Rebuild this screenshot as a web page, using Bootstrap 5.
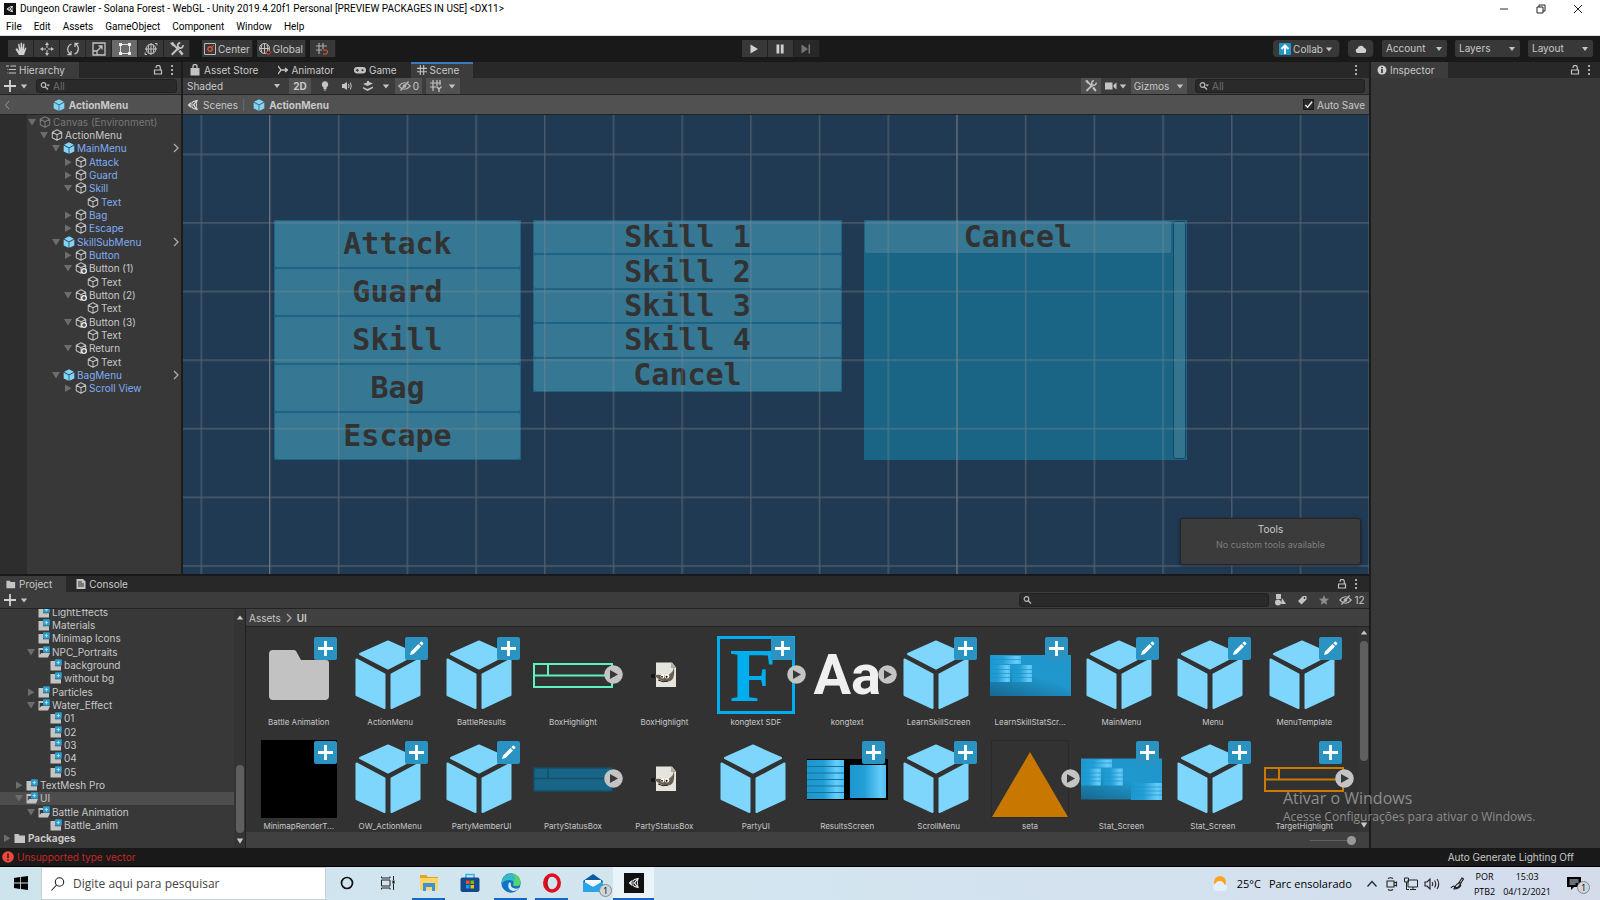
<!DOCTYPE html>
<html lang="en">
<head>
<meta charset="utf-8">
<meta name="viewport" content="width=device-width, initial-scale=1">
<title>Dungeon Crawler - Solana Forest - WebGL</title>
<link href="https://cdn.jsdelivr.net/npm/bootstrap@5.3.0/dist/css/bootstrap.min.css" rel="stylesheet">
<style>
:root{--ui:Inter,"Liberation Sans",sans-serif;--win:"Open Sans","Noto Sans",sans-serif;--panel:#383838;--bar:#3c3c3c;--dark:#282828;--line:#232323;--hi:#515151;--txt:#c8c8c8;--link:#7fadf4}
body{font-family:var(--ui);font-size:10px;line-height:12px;color:var(--txt);background:#191919;overflow:hidden}
svg{flex:none;display:block}
a{color:inherit;text-decoration:none}
button,select,input{font:inherit;color:inherit}
button{border:0;background:none;padding:0}
.i8{width:8px;height:8px}.i10{width:10px;height:10px}.i12{width:12px;height:12px}.i14{width:14px;height:14px}.i20{width:20px;height:20px}
.win{font-family:var(--win);color:#000}
.titlebar,.menubar{background:#fff;height:18px;font-family:Roboto,"Open Sans",sans-serif;font-size:10px;line-height:18px}
.menubar{border-bottom:1px solid #ddd}
.menubar a{padding:0 6px}
.winctl{width:37px;height:16px}
.maintools{height:26px;padding:4px 7px 5px 8px;background:#191919}
.tool{height:17px;width:26px;background:#383838;border-right:1px solid #222;display:flex;align-items:center;justify-content:center;gap:2px}
.tool.on{background:#6a6a6a}
.tool.wide{width:auto;padding:0 2px}
.pick{appearance:none;border:0;border-radius:2px;background:#383838 url("data:image/svg+xml,%3Csvg xmlns='http://www.w3.org/2000/svg' viewBox='0 0 6 4'%3E%3Cpath fill='%23c4c4c4' d='M0 0h6L3 4z'/%3E%3C/svg%3E") no-repeat right 5px center/6px 4px;padding:0 4px;height:17px;width:65px;font-size:10px;line-height:17px}
.pick.flat{background-color:transparent;width:102px;height:16px;line-height:16px}
.tabs{height:16px;background:var(--dark)}
.tab-item{height:16px;display:flex;align-items:center;gap:3px;padding:0 14px 0 6px;line-height:16px}
.tab-item.on{background:var(--bar)}
.tab-item.blue{box-shadow:inset 0 2px #3a79bb}
.subbar{height:17px;background:var(--bar);border-bottom:1px solid var(--line)}
.crumb{height:20px;background:var(--hi);border-bottom:1px solid var(--line)}
.find{height:14px;background:#2a2a2a;border:1px solid #212121;border-radius:3px;padding:0 3px;gap:3px}
.find input{background:none;border:0;outline:0;padding:0;min-width:0;width:100%;height:12px}
.find input::placeholder{color:#6e6e6e;opacity:1}
.chip{height:16px;display:flex;align-items:center;justify-content:center;gap:2px}
.chip.on{background:var(--hi)}
.w18{width:18px}.w20{width:20px}.w22{width:22px}.w24{width:24px}.w27{width:27px}.w34{width:34px}
.side{width:183px;background:var(--panel);border-right:2px solid #1c1c1c}
.gutter{width:27px;background:#2d2d2d}
.tree{display:grid;grid-auto-rows:1fr;margin:0;padding:0;list-style:none}
.tree li{display:flex;align-items:center;gap:2px;white-space:nowrap;min-height:0;padding-left:calc(var(--lv,0px) + var(--base,0px))}
.tree .i10{color:#6d6d6d}
.hier{height:280px;width:100%}
.l1{--lv:12px}.l2{--lv:24px}.l3{--lv:36px}.l4{--lv:48px}
.pf{color:var(--link)}
.sp{width:10px;flex:none}
.scene{background:#213a54;position:relative;overflow:hidden;padding:105px 0 0 91px}
.lattice{position:absolute;inset:0;width:100%;height:100%;pointer-events:none}
.gmenu{background:#1a6585;padding:1px;display:flex;flex-direction:column;gap:2px}
.gmenu button,.bag button{background:#367793;color:#323232;font:bold 30px/30px "DejaVu Sans Mono",monospace;border-radius:2px;text-align:center;width:100%}
.gmenu button{flex:1;min-height:0}
.m1{width:247px;height:240px;margin-right:12px}
.m2{width:309px;height:172px;margin-right:22px}
.bag{width:323px;height:240px;background:#1a6585;padding:1px}
.bag button{height:32px}
.bagbar{width:13px;flex:none;background:#33748f;border:1px solid #14495f;border-radius:3px;margin-left:2px}
.toolsbox{position:absolute;right:8px;bottom:9px;width:181px;height:47px;background:#3b3b3c;border:1px solid #252525;border-radius:3px;box-shadow:0 1px 4px #0006}
.inspector{width:231px;background:var(--panel);border-left:2px solid #1c1c1c}
.project{height:274px;border-top:2px solid #191919;background:var(--panel)}
.projtree{width:234px;overflow:hidden;padding-bottom:3px}
.proj{height:240px;flex:none;--base:2px}
.proj .sel{background:#4d4d4d}
.rail{width:11px;flex:none;background:#343434;padding:5px 1px 3px}
.thumb{width:8px;border-radius:4px;background:#5f5f5f}
.assets{background:#323232;overflow:hidden;border-left:1px solid #222}
.assetgrid{display:grid;grid-template-columns:repeat(12,1fr);row-gap:10px;padding:9px 8px 0 7px;height:206px;overflow:hidden}
.asset{display:flex;flex-direction:column;align-items:center;min-width:0;font-size:8px;line-height:16px}
.shot{width:76px;height:78px;position:relative;display:flex;align-items:center;justify-content:center}
.shot>.bigcube{width:66px;height:70px;margin-right:5px}
.bdg{position:absolute;top:1px;right:0;width:23px;height:23px}
.go{position:absolute;right:-12px;top:29px;width:19px;height:19px}
.fnt{font:bold 56px/78px Roboto,sans-serif;color:#f0f0f0}
.sdf{width:78px;height:78px;flex:none;border:3px solid #00aeef;color:#00aeef;font:bold 76px/72px "Liberation Serif",serif;padding-left:10px}
.zoomer{appearance:none;width:46px;height:8px;background:linear-gradient(#5e5e5e,#5e5e5e) center/100% 1px no-repeat}
.zoomer::-webkit-slider-thumb{appearance:none;width:9px;height:9px;border-radius:50%;background:#999}
.tick{appearance:none;width:11px;height:11px;margin:0;background:#2a2a2a url("data:image/svg+xml,%3Csvg xmlns='http://www.w3.org/2000/svg' viewBox='0 0 10 10'%3E%3Cpath fill='none' stroke='%23eee' stroke-width='1.6' d='M1.500 5.500l2.500 2.500 5-6'/%3E%3C/svg%3E") center/9px no-repeat;border:1px solid #1a1a1a}
.status{height:19px;background:#191919;border-bottom:1px solid #000;padding:0 26px 0 2px}
.watermark{position:absolute;left:1283px;bottom:74px;color:#8d8d8d;font-family:var(--win);pointer-events:none}
.taskbar{height:33px;background:linear-gradient(90deg,#cde4ed,#d3e6f0 45%,#d4dcec)}
.seek{width:285px;background:#fff;border:1px solid #c8d0d4;padding:0 9px;gap:8px}
.seek input{border:0;outline:0;font-size:12px;width:100%;padding:0}
.seek input::placeholder{color:#444;opacity:1}
.app{width:41px;height:33px;display:flex;align-items:center;justify-content:center;border-bottom:2px solid transparent;position:relative}
.app.run{background:linear-gradient(#1a66c4,#1a66c4) center bottom/33px 2px no-repeat border-box}
.app.act{background:#eaf3f8;border-bottom-color:#1a66c4}
.count{position:absolute;right:1px;bottom:1px;width:13px;height:13px;border-radius:50%;border:1px solid #888;background:#ccd6dc;font-size:9px;line-height:11px;text-align:center}
.tray{font-size:11px}
.trayicons{gap:6px;padding:0 10px 0 14px}
.clock{font-size:9px;line-height:15px;text-align:center}
</style>
</head>
<body class="d-flex flex-column vh-100">
<svg width="0" height="0" class="position-absolute" aria-hidden="true">
 <defs>
  <symbol id="cube" viewBox="0 0 16 16"><path d="M8 1l6.300 3.300v7.400L8 15l-6.300-3.300V4.300zM1.700 4.300L8 7.700l6.300-3.400M8 7.700V15" fill="none" stroke="#bdbdbd" stroke-width="1.400" stroke-linejoin="round"/></symbol>
  <symbol id="cubeadd" viewBox="0 0 16 16"><path d="M8 1l6.300 3.300v7.400L8 15l-6.300-3.300V4.300zM1.700 4.300L8 7.700l6.300-3.400M8 7.700V15" fill="none" stroke="#bdbdbd" stroke-width="1.400" stroke-linejoin="round"/><circle cx="12" cy="12" r="4" fill="#eee"/><path d="M12 9.500v5M9.500 12h5" stroke="#222" stroke-width="1.500"/></symbol>
  <symbol id="pcube" viewBox="0 0 16 16"><path d="M8 .3l6.500 3.300L8 7.200 1.500 3.600zM.9 4.700l6.600 3.600v7.500L.9 12.500zM15.100 4.700L8.500 8.300v7.500l6.600-3.300z" fill="#7fd6fd"/></symbol>
  <symbol id="big" viewBox="0 0 66 70"><g fill="#7fd6fd" stroke="#7fd6fd" stroke-width="2" stroke-linejoin="round"><path d="M33 1.500L61 14 33 28.500 5 14zM1.500 19.500L29.500 34.500V68L1.500 55zM64.500 19.500L36.500 34.500V68L64.500 55z"/></g></symbol>
  <symbol id="dn" viewBox="0 0 10 10"><path d="M1 2h8L5 8.500z" fill="currentColor"/></symbol>
  <symbol id="rt" viewBox="0 0 10 10"><path d="M2 1.500L8.500 5.200 2 9z" fill="currentColor"/></symbol>
  <symbol id="up" viewBox="0 0 10 10"><path d="M1 7h8L5 2z" fill="currentColor"/></symbol>
  <symbol id="car" viewBox="0 0 10 10"><path d="M1 3h8L5 8z" fill="#c4c4c4"/></symbol>
  <symbol id="chev" viewBox="0 0 10 10"><path d="M3 1l4 4-4 4" fill="none" stroke="#aaa" stroke-width="1.300"/></symbol>
  <symbol id="fold" viewBox="0 0 12 12"><path d="M.5 2h4l1 1.500H11V11H.5z" fill="#c4c4c4"/></symbol>
  <symbol id="foldp" viewBox="0 0 12 12"><path d="M.5 2h4.500V7.300h6v4.200H.5z" fill="#c4c4c4"/><rect x="5" y=".3" width="6.800" height="6.500" rx=".8" fill="#2d9ccb"/><path d="M8.400 1.800v3.600M6.600 3.600h3.600" stroke="#a8e2fb"/></symbol>
  <symbol id="foldo" viewBox="0 0 12 12"><path d="M.5 2h4.500V4H1.700v5l1.500-2H12l-2 4.500H.5z" fill="#c4c4c4"/><rect x="5" y=".3" width="6.800" height="6.500" rx=".8" fill="#2d9ccb"/><path d="M8.400 1.800v3.600M6.600 3.600h3.600" stroke="#a8e2fb"/></symbol>
  <symbol id="plus" viewBox="0 0 10 10"><path d="M5 0v10M0 5h10" stroke="#d2d2d2" stroke-width="1.500"/></symbol>
  <symbol id="lock" viewBox="0 0 10 10"><path d="M1.500 5h7v4h-7zM3 3V2.500a2 2 0 0 1 4.300 0V5" fill="none" stroke="#c4c4c4" stroke-width="1.200"/></symbol>
  <symbol id="dots" viewBox="0 0 10 10"><path d="M4.200 0h1.700v2H4.200zM4.200 4h1.700v2H4.200zM4.200 8h1.700v2H4.200z" fill="#c4c4c4"/></symbol>
  <symbol id="mag" viewBox="0 0 10 10"><circle cx="3.500" cy="4" r="2.300" fill="none" stroke="#bbb" stroke-width="1.200"/><path d="M5.200 5.700L8 8.500" stroke="#bbb" stroke-width="1.300"/></symbol>
  <symbol id="magd" viewBox="0 0 10 10"><circle cx="3.500" cy="4" r="2.300" fill="none" stroke="#bbb" stroke-width="1.200"/><path d="M5.200 5.700L8 8.500" stroke="#bbb" stroke-width="1.300"/><path d="M6.500 3.500H10L8.200 5.500z" fill="#bbb"/></symbol>
  <symbol id="unity" viewBox="0 0 16 16"><path fill-rule="evenodd" d="M14.500 1L8 2.700 6.700 4.800H4.500L.8 8l3.700 3.200h2.200L8 13.300 14.500 15l-1.600-5.500.8-1.500-.8-1.500zM4 7.200L5.500 6h2L8.700 4.100l2.600-.7L8.200 7.200zM4 8.800h4.200l3.100 3.800-2.600-.7L7.500 10h-2zM9.800 8l2.600-3.600L11.900 8l.5 3.600z" fill="currentColor"/></symbol>
  <symbol id="wrench" viewBox="0 0 16 16"><path d="M2 14.500L10 6.500M3 2l7 7" stroke="#c4c4c4" stroke-width="2.300"/><path d="M0 1l3.500-1 2 4-2 1zM9.500 10.500l2.500-1.500 3.500 4.500-2 2z" fill="#c4c4c4"/><path d="M14.800 3.500a3 3 0 1 1-3-2.500" fill="none" stroke="#c4c4c4" stroke-width="2"/></symbol>
  <symbol id="eye" viewBox="0 0 16 12"><path d="M1 6q7-8 14 0-7 8-14 0z" fill="none" stroke="#b4b4b4" stroke-width="1.500"/><circle cx="8" cy="6" r="2.300" fill="#b4b4b4"/><path d="M3 11.500L13 .5" stroke="#b4b4b4" stroke-width="1.500"/></symbol>
  <symbol id="hash" viewBox="0 0 12 12"><path d="M4 0v12M8 0v12M0 4h12M0 8h12" stroke="#c4c4c4" stroke-width="1.300"/></symbol>
  <symbol id="badd" viewBox="0 0 23 23"><rect width="23" height="23" rx="2" fill="#2a93c1"/><path d="M11.500 4v15M4 11.500h15" stroke="#fff" stroke-width="2.800"/></symbol>
  <symbol id="bedit" viewBox="0 0 23 23"><rect width="23" height="23" rx="2" fill="#2a93c1"/><path d="M5 18l1-3.500 7.500-7.500 2.500 2.500L8.500 17zM14.300 6.200l1.500-1.500q.7-.5 1.500.3l.8.900q.6.700 0 1.300L16.800 8.600z" fill="#fff"/></symbol>
  <symbol id="playc" viewBox="0 0 19 19"><circle cx="9.500" cy="9.500" r="9.300" fill="#c4c4c4"/><path d="M6 5l8 4.500L6 14z" fill="#383838"/></symbol>
  <symbol id="gimp" viewBox="0 0 26 26"><path d="M5 .5h16l4 5V25H5z" fill="#e6e5dd"/><path d="M20 .5V6h5z" fill="#aaa"/><path d="M2 14q4-2 9-1 3 1 6 0 5-2 6-8 1 9-2 13-4 3-9 1-4-1-7-4z" fill="#6a5f4e"/><circle cx="11.500" cy="14.500" r="1.900" fill="#fff"/><circle cx="16" cy="14.300" r="2.300" fill="#fff"/><circle cx="11" cy="14.800" r=".9"/><circle cx="15.600" cy="14.800" r="1"/><circle cx="2" cy="14" r="2" fill="#111"/><path d="M7 18q5 3 10 1" stroke="#222" fill="none"/></symbol>
  <linearGradient id="gb"><stop offset="0" stop-color="#1c97cd"/><stop offset=".45" stop-color="#1f9fd6"/><stop offset=".8" stop-color="#66cfff"/><stop offset="1" stop-color="#48bdf2"/></linearGradient>
  <linearGradient id="gs" x2="1" y2="0"><stop offset="0" stop-color="#1b98cf"/><stop offset=".4" stop-color="#229fd6"/><stop offset=".85" stop-color="#64ccfb"/><stop offset="1" stop-color="#4fbfee"/></linearGradient>
  <linearGradient id="gd" x1="0" y1="1" x2=".6" y2="0"><stop offset="0" stop-color="#17678f"/><stop offset=".6" stop-color="#1f98cd"/><stop offset="1" stop-color="#2096cc"/></linearGradient>
  <symbol id="stat" viewBox="0 0 81 41"><rect width="81" height="41" fill="url(#gd)"/><path d="M0 1h31v8H0z" fill="url(#gs)"/><path d="M0 10h20v17H0z" fill="url(#gs)"/><path d="M22 10h20v17H22z" fill="url(#gs)"/><path d="M0 4.500h31M0 14.500h42M0 18.500h42M0 22.500h42" stroke="#2392c4" stroke-width=".7"/></symbol>
 </defs>
</svg>

<header class="titlebar d-flex align-items-center text-black">
 <svg width="12" height="12" class="ms-1 me-1 flex-shrink-0" viewBox="0 0 16 16"><rect width="16" height="16" fill="#111"/><use href="#unity" x="3" y="3" width="10" height="10" color="#fff"/></svg>
 <span>Dungeon Crawler - Solana Forest - WebGL - Unity 2019.4.20f1 Personal [PREVIEW PACKAGES IN USE] &lt;DX11&gt;</span>
 <div class="ms-auto d-flex me-1">
  <button class="winctl" aria-label="Minimize"><svg class="i10 mx-auto" viewBox="0 0 10 10"><path d="M1 5h8" stroke="#333"/></svg></button>
  <button class="winctl" aria-label="Restore"><svg class="i10 mx-auto" viewBox="0 0 10 10"><path d="M1 3h6v6H1zM3 3V1h6v6H7" fill="none" stroke="#222"/></svg></button>
  <button class="winctl" aria-label="Close"><svg class="i10 mx-auto" viewBox="0 0 10 10"><path d="M1 1l8 8M9 1L1 9" stroke="#222"/></svg></button>
 </div>
</header>
<nav class="menubar text-black d-flex"><a href="#">File</a><a href="#">Edit</a><a href="#">Assets</a><a href="#">GameObject</a><a href="#">Component</a><a href="#">Window</a><a href="#">Help</a></nav>

<div class="maintools d-flex align-items-center">
 <button class="tool" aria-label="Hand"><svg class="i14" viewBox="0 0 14 14"><path d="M3 6L1.500 7.500 5 13h5l2.500-7-1.200-.5L10 8l.5-6.300-1.300-.1L8.500 7 8 .8H6.600L6.500 7 5.300 1.800 4 2l1 7z" fill="#d0d0d0"/></svg></button>
 <button class="tool" aria-label="Move"><svg class="i14" viewBox="0 0 14 14"><path d="M7 3v3M7 8v3M3 7h3M8 7h3" stroke="#c4c4c4"/><path d="M7 0l2 3H5zM7 14l2-3H5zM0 7l3-2v4zM14 7l-3-2v4z" fill="#c4c4c4"/></svg></button>
 <button class="tool" aria-label="Rotate"><svg class="i14" viewBox="0 0 14 14"><path d="M4.500 12A5.500 5.500 0 0 1 5.500 2M9.500 2A5.500 5.500 0 0 1 8.500 12M1.500 12.500h3.500V9M12.500 1.500H9V5" fill="none" stroke="#c4c4c4" stroke-width="1.300"/></svg></button>
 <button class="tool" aria-label="Scale"><svg class="i14" viewBox="0 0 14 14"><path d="M1 1h12v12H1zM1 9h4v4M5 9l5-5M6.500 4H10v3.500" fill="none" stroke="#c4c4c4" stroke-width="1.300"/></svg></button>
 <button class="tool on" aria-label="Rect"><svg class="i14" viewBox="0 0 14 14"><path d="M2.500 2.500h9v9h-9z" fill="none" stroke="#ddd"/><path d="M1 1h3v3H1zM10 1h3v3h-3zM1 10h3v3H1zM10 10h3v3h-3z" fill="#eee"/></svg></button>
 <button class="tool" aria-label="Transform"><svg class="i14" viewBox="0 0 14 14"><circle cx="7" cy="7" r="4.800" fill="none" stroke="#c4c4c4"/><path d="M7 1v12M1 7h12M5 2.500q-2 4.500 0 9M9 2.500q2 4.500 0 9M11 1.500h2v2M3 12.500H1v-2" stroke="#c4c4c4" fill="none"/></svg></button>
 <button class="tool me-2" aria-label="Custom tools"><svg class="i14"><use href="#wrench"/></svg></button>
 <button class="tool wide ms-1"><svg class="i12" viewBox="0 0 12 12"><path d="M.5.500h11v11H.500z" fill="none" stroke="#bbb"/><circle cx="6" cy="6" r="2.200" fill="none" stroke="#e8593a" stroke-width="1.300"/><path d="M8 4l2-2" stroke="#e8593a"/></svg>Center</button>
 <button class="tool wide ms-1"><svg class="i12" viewBox="0 0 12 12"><circle cx="5.500" cy="5.500" r="5" fill="none" stroke="#c4c4c4"/><path d="M5.500.500v10M.5 5.500h10M3 1.500q-2 4 0 8M8 1.500q2 4 0 8" stroke="#c4c4c4" fill="none"/><circle cx="9.500" cy="9.500" r="1.800" fill="#222" stroke="#e8593a"/></svg>Global</button>
 <button class="tool ms-1" aria-label="Snap"><svg class="i12" viewBox="0 0 12 12"><path d="M3 0v11M7 0v6M0 3h11M0 7h6" stroke="#aaa" stroke-width="1.200"/><path d="M7 7h3q1.500 0 1.500 2T10 11H7" stroke="#e8593a" fill="none"/></svg></button>
 <div class="d-flex" style="margin-left:25.6%">
  <button class="tool" aria-label="Play"><svg class="i10" viewBox="0 0 10 10"><path d="M1.500.500L9 5 1.500 9.500z" fill="#d0d0d0"/></svg></button>
  <button class="tool" aria-label="Pause"><svg class="i10" viewBox="0 0 10 10"><path d="M1.500.500h2.800v9H1.500zM5.800.500h2.800v9H5.800z" fill="#d0d0d0"/></svg></button>
  <button class="tool opacity-50" aria-label="Step"><svg class="i10" viewBox="0 0 10 10"><path d="M.5.500L7 5 .5 9.500zM7.500.500H9v9H7.500z" fill="#d0d0d0"/></svg></button>
 </div>
 <div class="ms-auto d-flex gap-2">
  <button class="tool wide rounded-1"><svg class="i12 ms-1" viewBox="0 0 12 12"><rect width="12" height="12" rx="1" fill="#2196c9"/><path d="M6 11V3M2.500 6L6 2.500 9.500 6" fill="none" stroke="#fff" stroke-width="2"/></svg>Collab<svg class="i8 me-1"><use href="#car"/></svg></button>
  <button class="tool rounded-1" aria-label="Services"><svg class="i12" viewBox="0 0 12 12"><path d="M2.500 10a2.300 2.300 0 0 1 0-4.500 3.500 3.500 0 0 1 6.700-.5A2.600 2.600 0 0 1 9.500 10z" fill="#d0d0d0"/></svg></button>
  <select class="pick" aria-label="Account"><option>Account</option></select>
  <select class="pick" aria-label="Layers"><option>Layers</option></select>
  <select class="pick" aria-label="Layout"><option>Layout</option></select>
 </div>
</div>

<main class="d-flex flex-fill" style="min-height:0">
 <div class="d-flex flex-column flex-fill" style="min-width:0">
  <div class="d-flex flex-fill" style="min-height:0">
   <section class="side d-flex flex-column flex-shrink-0">
    <div class="tabs d-flex align-items-center">
     <a href="#" class="tab-item on"><svg class="i10" viewBox="0 0 10 10"><path d="M0 1h3M3 4.500h7M3 8h7M4.500 1H10M1.500 4.500h.8M1.500 8h.8" stroke="#c4c4c4" stroke-width="1.200"/></svg>Hierarchy</a>
     <svg class="i10 ms-auto me-1"><use href="#lock"/></svg><svg class="i10 me-1"><use href="#dots"/></svg>
    </div>
    <div class="subbar d-flex align-items-center ps-1 gap-1">
     <svg class="i12"><use href="#plus"/></svg><svg class="i8 me-1"><use href="#car"/></svg>
     <div class="find d-flex align-items-center flex-fill me-1"><svg class="i10"><use href="#magd"/></svg><input placeholder="All" aria-label="Search hierarchy"></div>
    </div>
    <div class="crumb d-flex align-items-center justify-content-center fw-bold position-relative gap-1">
     <svg class="i10 position-absolute start-0 ms-1" viewBox="0 0 10 10"><path d="M5 1L1.500 5 5 9" fill="none" stroke="#999"/></svg>
     <svg class="i12"><use href="#pcube"/></svg><span>ActionMenu</span>
    </div>
    <div class="d-flex flex-fill">
     <div class="gutter flex-shrink-0"></div>
     <ul class="tree hier">
      <li style="color:#777"><svg class="i10"><use href="#dn"/></svg><svg class="i12 opacity-50"><use href="#cube"/></svg>Canvas (Environment)</li>
      <li class="l1"><svg class="i10"><use href="#dn"/></svg><svg class="i12"><use href="#cube"/></svg>ActionMenu</li>
      <li class="l2 pf"><svg class="i10"><use href="#dn"/></svg><svg class="i12"><use href="#pcube"/></svg>MainMenu<svg class="i10 ms-auto"><use href="#chev"/></svg></li>
      <li class="l3 pf"><svg class="i10"><use href="#rt"/></svg><svg class="i12"><use href="#cube"/></svg>Attack</li>
      <li class="l3 pf"><svg class="i10"><use href="#rt"/></svg><svg class="i12"><use href="#cube"/></svg>Guard</li>
      <li class="l3 pf"><svg class="i10"><use href="#dn"/></svg><svg class="i12"><use href="#cube"/></svg>Skill</li>
      <li class="l4 pf"><span class="sp"></span><svg class="i12"><use href="#cube"/></svg>Text</li>
      <li class="l3 pf"><svg class="i10"><use href="#rt"/></svg><svg class="i12"><use href="#cube"/></svg>Bag</li>
      <li class="l3 pf"><svg class="i10"><use href="#rt"/></svg><svg class="i12"><use href="#cube"/></svg>Escape</li>
      <li class="l2 pf"><svg class="i10"><use href="#dn"/></svg><svg class="i12"><use href="#pcube"/></svg>SkillSubMenu<svg class="i10 ms-auto"><use href="#chev"/></svg></li>
      <li class="l3 pf"><svg class="i10"><use href="#rt"/></svg><svg class="i12"><use href="#cube"/></svg>Button</li>
      <li class="l3"><svg class="i10"><use href="#dn"/></svg><svg class="i12"><use href="#cubeadd"/></svg>Button (1)</li>
      <li class="l4"><span class="sp"></span><svg class="i12"><use href="#cube"/></svg>Text</li>
      <li class="l3"><svg class="i10"><use href="#dn"/></svg><svg class="i12"><use href="#cubeadd"/></svg>Button (2)</li>
      <li class="l4"><span class="sp"></span><svg class="i12"><use href="#cube"/></svg>Text</li>
      <li class="l3"><svg class="i10"><use href="#dn"/></svg><svg class="i12"><use href="#cubeadd"/></svg>Button (3)</li>
      <li class="l4"><span class="sp"></span><svg class="i12"><use href="#cube"/></svg>Text</li>
      <li class="l3"><svg class="i10"><use href="#dn"/></svg><svg class="i12"><use href="#cubeadd"/></svg>Return</li>
      <li class="l4"><span class="sp"></span><svg class="i12"><use href="#cube"/></svg>Text</li>
      <li class="l2 pf"><svg class="i10"><use href="#dn"/></svg><svg class="i12"><use href="#pcube"/></svg>BagMenu<svg class="i10 ms-auto"><use href="#chev"/></svg></li>
      <li class="l3 pf"><svg class="i10"><use href="#rt"/></svg><svg class="i12"><use href="#cube"/></svg>Scroll View</li>
     </ul>
    </div>
   </section>
   <section class="d-flex flex-column flex-fill" style="min-width:0">
    <div class="tabs d-flex align-items-center">
     <a href="#" class="tab-item"><svg class="i12" viewBox="0 0 12 12"><path d="M1.500 4h9v7.500h-9z" fill="#c4c4c4"/><path d="M4 5V2.500a2 2 0 0 1 4 0V5" fill="none" stroke="#c4c4c4" stroke-width="1.300"/></svg>Asset Store</a>
     <a href="#" class="tab-item"><svg class="i10" viewBox="0 0 10 10"><path d="M0 1l3 4-3 4M2 5h7M7 3l2.500 2L7 7" fill="none" stroke="#c4c4c4" stroke-width="1.300"/></svg>Animator</a>
     <a href="#" class="tab-item"><svg class="i12" viewBox="0 0 12 12"><rect y="3" width="12" height="6.500" rx="3.200" fill="#c4c4c4"/><path d="M3.300 4.800v3M1.800 6.300h3" stroke="#282828"/><circle cx="8.500" cy="6.300" r="1" fill="#282828"/></svg>Game</a>
     <a href="#" class="tab-item on blue"><svg class="i10"><use href="#hash"/></svg>Scene</a>
     <svg class="i10 ms-auto me-2"><use href="#dots"/></svg>
    </div>
    <div class="subbar d-flex align-items-center">
     <select class="pick flat" aria-label="Draw mode"><option>Shaded</option></select>
     <button class="chip on fw-bold ms-1 w22">2D</button>
     <button class="chip ms-1 w20" aria-label="Lighting"><svg class="i10" viewBox="0 0 10 10"><path d="M5 .3a3.200 3.200 0 0 1 1.600 6V8H3.400V6.300A3.200 3.200 0 0 1 5 .3zM3.800 8.500h2.400v1H3.800z" fill="#c4c4c4"/></svg></button>
     <button class="chip w24" aria-label="Audio"><svg class="i10" viewBox="0 0 10 10"><path d="M0 3h2l3-2v8L2 7H0z" fill="#c4c4c4"/><path d="M6.500 3q1 2 0 4M8.300 1.500q2 3.500 0 7" fill="none" stroke="#c4c4c4"/></svg></button>
     <button class="chip w18" aria-label="Effects"><svg class="i12" viewBox="0 0 12 12"><path d="M1 4l4-1.500V1h2v1l4 1.500L5.500 6zM1 7l4.500 2L11 6.500V8L5.500 11 1 8.500z" fill="#c4c4c4"/></svg></button>
     <button class="chip w18" aria-label="Effect options"><svg class="i8"><use href="#car"/></svg></button>
     <button class="chip on w27"><svg width="13" height="10"><use href="#eye"/></svg>0</button>
     <button class="chip on ms-1 w34" aria-label="Grid"><svg class="i12" viewBox="0 0 12 12"><path d="M3 0v11M7 0v6M0 3h11M0 7h6M10 0v5" stroke="#c4c4c4" stroke-width="1.200"/><path d="M6.500 6.500L9 9l2.500-2.500M9 9v3" stroke="#c4c4c4" stroke-width="1.300" fill="none"/></svg><svg class="i8 ms-1"><use href="#car"/></svg></button>
     <div class="ms-auto d-flex align-items-center">
      <button class="chip on w20" aria-label="Tools"><svg class="i12"><use href="#wrench"/></svg></button>
      <button class="chip" style="width:30px" aria-label="Camera"><svg class="i12" viewBox="0 0 12 12"><path d="M0 2.500h7.500v7H0zM8.500 5l3-2.500v7l-3-2.500z" fill="#c4c4c4"/></svg><svg class="i8"><use href="#car"/></svg></button>
      <button class="chip on" style="width:56px;gap:7px">Gizmos<svg class="i8"><use href="#car"/></svg></button>
      <div class="find d-flex align-items-center ms-2 me-1" style="width:170px"><svg class="i10"><use href="#magd"/></svg><input placeholder="All" aria-label="Search scene"></div>
     </div>
    </div>
    <div class="crumb d-flex align-items-center ps-1 pe-1">
     <svg class="i12" color="#ddd"><use href="#unity"/></svg><a href="#" class="ms-1">Scenes</a><span class="mx-1 text-secondary">|</span><svg class="i12 me-1 ms-1"><use href="#pcube"/></svg><b>ActionMenu</b>
     <label class="ms-auto d-flex align-items-center" style="gap:3px"><input type="checkbox" class="tick" checked>Auto Save</label>
    </div>
    <div class="scene flex-fill d-flex align-items-start">
     <div class="gmenu m1"><button>Attack</button><button>Guard</button><button>Skill</button><button>Bag</button><button>Escape</button></div>
     <div class="gmenu m2"><button>Skill 1</button><button>Skill 2</button><button>Skill 3</button><button>Skill 4</button><button>Cancel</button></div>
     <div class="bag d-flex"><div class="flex-fill"><button>Cancel</button></div><div class="bagbar"></div></div>
     <svg class="lattice"><defs><pattern id="lat" x="17.500" y="38.500" width="68.700" height="68.600" patternUnits="userSpaceOnUse"><path d="M.8 0v68.600M0 .8h68.700" stroke="#8a8a8a" stroke-opacity=".48" stroke-width="1.200"/></pattern></defs><rect width="100%" height="100%" fill="url(#lat)"/><path d="M86.500 0v600M774 0v600" stroke="#999" stroke-opacity=".45" stroke-width="1"/></svg>
     <div class="toolsbox text-center"><div class="mt-1">Tools</div><div class="mt-1" style="font-size:9px;color:#7d7d7d">No custom tools available</div></div>
    </div>
   </section>
  </div>

  <section class="project d-flex flex-column flex-shrink-0">
   <div class="tabs d-flex align-items-center">
    <a href="#" class="tab-item on me-1"><svg class="i10"><use href="#fold"/></svg>Project</a>
    <a href="#" class="tab-item"><svg class="i10" viewBox="0 0 10 10"><path d="M.5 0H7l2.500 2.500V10h-9z" fill="#c4c4c4"/><path d="M2 3h4M2 5h6M2 7h6" stroke="#333"/></svg>Console</a>
    <svg class="i10 ms-auto me-1"><use href="#lock"/></svg><svg class="i10 me-2"><use href="#dots"/></svg>
   </div>
   <div class="subbar d-flex align-items-center ps-1">
    <svg class="i12 me-1"><use href="#plus"/></svg><svg class="i8"><use href="#car"/></svg>
    <div class="find d-flex align-items-center ms-auto" style="width:250px"><svg class="i10"><use href="#mag"/></svg><input aria-label="Search assets"></div>
    <div class="d-flex">
     <button class="chip w22" aria-label="By type"><svg class="i12" viewBox="0 0 12 12"><path d="M2 0h5v5H2zM8 4l4 6H7z" fill="#c4c4c4"/><circle cx="4" cy="8.500" r="3" fill="#c4c4c4"/></svg></button>
     <button class="chip w22" aria-label="By label"><svg class="i10" viewBox="0 0 10 10"><path d="M1 6l5-5h3.500v3.500l-5 5z" fill="#c4c4c4"/><circle cx="7.500" cy="3" r=".9" fill="#333"/></svg></button>
     <button class="chip w22" aria-label="Favorites"><svg class="i10" viewBox="0 0 10 10"><path d="M5 0l1.500 3.400 3.500.4-2.600 2.400.7 3.600L5 8 1.900 9.800l.7-3.600L0 3.800l3.500-.4z" fill="#8a8a8a"/></svg></button>
     <button class="chip w34"><svg width="13" height="10"><use href="#eye"/></svg>12</button>
    </div>
   </div>
   <div class="d-flex flex-fill" style="min-height:0">
    <div class="projtree d-flex flex-column justify-content-end flex-shrink-0">
     <ul class="tree proj">
      <li class="l2"><span class="sp"></span><svg class="i12"><use href="#foldp"/></svg>LightEffects</li>
      <li class="l2"><span class="sp"></span><svg class="i12"><use href="#foldp"/></svg>Materials</li>
      <li class="l2"><span class="sp"></span><svg class="i12"><use href="#foldp"/></svg>Minimap Icons</li>
      <li class="l2"><svg class="i10"><use href="#dn"/></svg><svg class="i12"><use href="#foldo"/></svg>NPC_Portraits</li>
      <li class="l3"><span class="sp"></span><svg class="i12"><use href="#foldp"/></svg>background</li>
      <li class="l3"><span class="sp"></span><svg class="i12"><use href="#foldp"/></svg>without bg</li>
      <li class="l2"><svg class="i10"><use href="#rt"/></svg><svg class="i12"><use href="#foldp"/></svg>Particles</li>
      <li class="l2"><svg class="i10"><use href="#dn"/></svg><svg class="i12"><use href="#foldo"/></svg>Water_Effect</li>
      <li class="l3"><span class="sp"></span><svg class="i12"><use href="#foldp"/></svg>01</li>
      <li class="l3"><span class="sp"></span><svg class="i12"><use href="#foldp"/></svg>02</li>
      <li class="l3"><span class="sp"></span><svg class="i12"><use href="#foldp"/></svg>03</li>
      <li class="l3"><span class="sp"></span><svg class="i12"><use href="#foldp"/></svg>04</li>
      <li class="l3"><span class="sp"></span><svg class="i12"><use href="#foldp"/></svg>05</li>
      <li class="l1"><svg class="i10"><use href="#rt"/></svg><svg class="i12"><use href="#foldp"/></svg>TextMesh Pro</li>
      <li class="l1 sel"><svg class="i10"><use href="#dn"/></svg><svg class="i12"><use href="#foldo"/></svg>UI</li>
      <li class="l2"><svg class="i10"><use href="#dn"/></svg><svg class="i12"><use href="#foldo"/></svg>Battle Animation</li>
      <li class="l3"><span class="sp"></span><svg class="i12"><use href="#foldp"/></svg>Battle_anim</li>
      <li class="fw-bold"><svg class="i10"><use href="#rt"/></svg><svg class="i12"><use href="#fold"/></svg>Packages</li>
     </ul>
    </div>
    <div class="rail d-flex flex-column align-items-center"><svg class="i8"><use href="#up"/></svg><div class="thumb mt-auto mb-1" style="height:68px"></div><svg class="i8"><use href="#dn"/></svg></div>
    <div class="assets flex-fill d-flex flex-column" style="min-width:0">
     <div class="subbar d-flex align-items-center flex-shrink-0" style="height:18px;background:#404040;padding-left:3px;gap:3px"><a href="#">Assets</a><svg class="i10"><use href="#chev"/></svg><span class="fw-semibold">UI</span></div>
     <div class="d-flex flex-fill" style="min-height:0">
      <div class="assetgrid flex-fill">
       <div class="asset"><div class="shot"><svg width="60" height="50" viewBox="0 0 60 50"><path d="M4 0h21q1 0 2 1l5 9h25q3 0 3 3v33q0 4-4 4H4q-4 0-4-4V4q0-4 4-4z" fill="#c2c2c2"/></svg><svg class="bdg"><use href="#badd"/></svg></div>Battle Animation</div>
       <div class="asset"><div class="shot"><svg class="bigcube"><use href="#big"/></svg><svg class="bdg"><use href="#bedit"/></svg></div>ActionMenu</div>
       <div class="asset"><div class="shot"><svg class="bigcube"><use href="#big"/></svg><svg class="bdg"><use href="#badd"/></svg></div>BattleResults</div>
       <div class="asset"><div class="shot"><svg width="80" height="25" viewBox="0 0 80 25"><path d="M1 1h78v23H1zM1 12.500h78M15 1v11" fill="none" stroke="#5df2c0" stroke-width="2"/></svg><svg class="go"><use href="#playc"/></svg></div>BoxHighlight</div>
       <div class="asset"><div class="shot"><svg width="26" height="26"><use href="#gimp"/></svg></div>BoxHighlight</div>
       <div class="asset"><div class="shot"><div class="sdf">F</div><svg class="bdg"><use href="#badd"/></svg><svg class="go"><use href="#playc"/></svg></div>kongtext SDF</div>
       <div class="asset"><div class="shot"><span class="fnt">Aa</span><svg class="go"><use href="#playc"/></svg></div>kongtext</div>
       <div class="asset"><div class="shot"><svg class="bigcube"><use href="#big"/></svg><svg class="bdg"><use href="#badd"/></svg></div>LearnSkillScreen</div>
       <div class="asset"><div class="shot"><svg width="81" height="41"><use href="#stat"/></svg><svg class="bdg"><use href="#badd"/></svg></div>LearnSkillStatScr...</div>
       <div class="asset"><div class="shot"><svg class="bigcube"><use href="#big"/></svg><svg class="bdg"><use href="#bedit"/></svg></div>MainMenu</div>
       <div class="asset"><div class="shot"><svg class="bigcube"><use href="#big"/></svg><svg class="bdg"><use href="#bedit"/></svg></div>Menu</div>
       <div class="asset"><div class="shot"><svg class="bigcube"><use href="#big"/></svg><svg class="bdg"><use href="#bedit"/></svg></div>MenuTemplate</div>
       <div class="asset"><div class="shot bg-black"><svg class="bdg"><use href="#badd"/></svg></div>MinimapRenderT...</div>
       <div class="asset"><div class="shot"><svg class="bigcube"><use href="#big"/></svg><svg class="bdg"><use href="#badd"/></svg></div>OW_ActionMenu</div>
       <div class="asset"><div class="shot"><svg class="bigcube"><use href="#big"/></svg><svg class="bdg"><use href="#bedit"/></svg></div>PartyMemberUI</div>
       <div class="asset"><div class="shot"><svg width="80" height="25" viewBox="0 0 80 25"><path d="M1 1h78v23H1zM1 11.500h78M15 1v11" fill="#196587" stroke="#154f69" stroke-width="1.500"/></svg><svg class="go"><use href="#playc"/></svg></div>PartyStatusBox</div>
       <div class="asset"><div class="shot"><svg width="26" height="26"><use href="#gimp"/></svg></div>PartyStatusBox</div>
       <div class="asset"><div class="shot"><svg class="bigcube"><use href="#big"/></svg></div>PartyUI</div>
       <div class="asset"><div class="shot"><svg width="81" height="41" viewBox="0 0 81 41"><path d="M0 0h81v41H0z"/><rect y="1" width="37" height="39" fill="url(#gb)"/><path d="M0 7.500h37M0 14h37M0 20.500h37M0 27h37M0 33.500h37" stroke="#1c7198"/><rect x="43" y="6" width="36" height="33" fill="url(#gs)"/></svg><svg class="bdg"><use href="#badd"/></svg></div>ResultsScreen</div>
       <div class="asset"><div class="shot"><svg class="bigcube"><use href="#big"/></svg><svg class="bdg"><use href="#badd"/></svg></div>ScrollMenu</div>
       <div class="asset"><div class="shot"><svg width="78" height="78" viewBox="0 0 78 78"><path d="M.5.500h77v77H.5z" fill="none" stroke="#2a2a2a"/><path d="M39 12l38 65H1z" fill="#c87800"/></svg><svg class="go"><use href="#playc"/></svg></div>seta</div>
       <div class="asset"><div class="shot"><svg width="81" height="42" viewBox="0 0 81 42"><use href="#stat" width="81" height="42"/><path d="M50 25h31v17H50z" fill="url(#gs)"/><path d="M50 29h31M50 33h31M50 37h31" stroke="#2392c4" stroke-width=".7"/></svg><svg class="bdg"><use href="#badd"/></svg></div>Stat_Screen</div>
       <div class="asset"><div class="shot"><svg class="bigcube"><use href="#big"/></svg><svg class="bdg"><use href="#badd"/></svg></div>Stat_Screen</div>
       <div class="asset"><div class="shot"><svg width="80" height="25" viewBox="0 0 80 25"><path d="M1 1h78v23H1zM1 12.500h78M15 1v11" fill="none" stroke="#cc7a00" stroke-width="2"/></svg><svg class="bdg"><use href="#badd"/></svg><svg class="go"><use href="#playc"/></svg></div>TargetHighlight</div>
      </div>
      <div class="rail d-flex flex-column align-items-center" style="padding-top:2px"><svg class="i8"><use href="#up"/></svg><div class="thumb mt-1" style="height:120px"></div><svg class="i8 mt-auto"><use href="#dn"/></svg></div>
     </div>
     <div class="d-flex align-items-center justify-content-end flex-shrink-0" style="height:16px;background:#404040;padding-right:13px"><input type="range" class="zoomer" value="100" aria-label="Icon size"></div>
    </div>
   </div>
  </section>
 </div>
 <aside class="inspector flex-shrink-0">
  <div class="tabs d-flex align-items-center">
   <a href="#" class="tab-item on"><svg class="i10" viewBox="0 0 10 10"><circle cx="5" cy="5" r="4.500" fill="#d0d0d0"/><path d="M5 4v4M5 2v1.300" stroke="#222" stroke-width="1.500"/></svg>Inspector</a>
   <svg class="i10 ms-auto me-1"><use href="#lock"/></svg><svg class="i10" style="margin-right:6px"><use href="#dots"/></svg>
  </div>
 </aside>
</main>

<footer class="status d-flex align-items-center justify-content-between">
 <span class="d-flex align-items-center" style="color:#c02828;gap:3px"><svg class="i12" viewBox="0 0 12 12"><circle cx="6" cy="6" r="5.800" fill="#f0483e"/><path d="M6 2.500v4.500M6 8.200v1.500" stroke="#222" stroke-width="1.500"/></svg>Unsupported type vector</span><span>Auto Generate Lighting Off</span>
</footer>

<div class="taskbar win d-flex">
 <button class="app" aria-label="Start"><svg class="i14" viewBox="0 0 14 14"><path d="M0 2l6-.9v5.500H0zM6.800 1L14 0v6.600H6.800zM0 7.400h6v5.500L0 12zM6.800 7.400H14V14l-7.200-1z"/></svg></button>
 <div class="seek d-flex align-items-center"><svg class="i14" viewBox="0 0 14 14"><circle cx="8.500" cy="5" r="4.200" fill="none" stroke="#222" stroke-width="1.100"/><path d="M5.500 8L.5 13.500" stroke="#222" stroke-width="1.100"/></svg><input placeholder="Digite aqui para pesquisar" aria-label="Search"></div>
 <button class="app" aria-label="Cortana"><svg class="i14" viewBox="0 0 14 14"><circle cx="7" cy="7" r="5.500" fill="none" stroke="#111" stroke-width="1.700"/></svg></button>
 <button class="app" aria-label="Task view"><svg class="i14" viewBox="0 0 14 14"><path d="M.5 4h8.500v6H.5zM.5.500V2h8.500V.500M.5 13.500V12h8.500v1.500M12.500 0v4M12.500 8v6" fill="none" stroke="#222"/><path d="M11.500 4.500h2v3h-2z"/></svg></button>
 <button class="app run" aria-label="File Explorer"><svg class="i20" viewBox="0 0 20 20"><path d="M1 2h6l2 2h10v13H1z" fill="#e7a31a"/><path d="M1 5h18v12H1z" fill="#fcd665"/><path d="M4 10h12v8h-3v-4H7v4H4z" fill="#3b92dc"/></svg></button>
 <button class="app" aria-label="Store"><svg class="i20" viewBox="0 0 20 20"><path d="M6 5V1.500h8V5" fill="none" stroke="#30b5ee" stroke-width="1.600"/><rect x=".5" y="4.500" width="19" height="14.500" rx="2" fill="#15498c"/><path d="M6 7.500h3.500V11H6z" fill="#f25022"/><path d="M10.500 7.500H14V11h-3.500z" fill="#7fba00"/><path d="M6 12h3.500v3.500H6z" fill="#00a4ef"/><path d="M10.500 12H14v3.500h-3.500z" fill="#ffb900"/></svg></button>
 <button class="app run" aria-label="Edge"><svg class="i20" viewBox="0 0 20 20"><circle cx="10" cy="10" r="9.700" fill="#1474c4"/><path d="M.5 9A9.700 9.700 0 0 1 19.700 9q0 4-4.500 4-3 0-3-1.500 1-1 .5-2.500-1-2-4-2Q3 7 .5 11z" fill="#35b8c8"/><path d="M11 .4A9.700 9.700 0 0 1 19.700 9q0 4-4.500 4-3 0-3-1.500 1-1 .5-2.500Q16 5 11 .4z" fill="#58d36a"/><path d="M8 9.500q-2.500 7 4 8.500 4 0 6-3-4 1.500-7-.5-2-2-1-4.500z" fill="#d8ecf5"/></svg></button>
 <button class="app run" aria-label="Opera"><svg class="i20" viewBox="0 0 20 20"><ellipse cx="10" cy="10" rx="7.200" ry="8" fill="none" stroke="#e0101e" stroke-width="3.600"/><path d="M6.300 4.500q-3 5.500 0 11" stroke="#b00714" fill="none" stroke-width="1.500"/></svg></button>
 <button class="app" aria-label="Mail"><svg class="i20" viewBox="0 0 20 20"><path d="M0 8l10-7 10 7v3H0z" fill="#0f5aa5"/><path d="M2 7h16v6H2z" fill="#f4f9fc"/><path d="M0 8l10 6 10-6v11H0z" fill="#2aa4e8"/></svg><span class="count">1</span></button>
 <button class="app act" aria-label="Unity"><svg class="i20" viewBox="0 0 20 20"><rect width="20" height="20" fill="#111"/><use href="#unity" x="4" y="4" width="12" height="12" color="#eee"/></svg></button>
 <div class="tray ms-auto d-flex align-items-center">
  <svg width="18" height="18" class="me-2" viewBox="0 0 18 18"><circle cx="9" cy="7" r="6" fill="#fba51c"/><path d="M4.500 16a4 4 0 0 1 0-7.500 4.800 4.800 0 0 1 8.800 1A3.300 3.300 0 0 1 13.500 16z" fill="#e4f0fb"/></svg>
  <span class="me-2">25°C</span><span>Parc ensolarado</span>
  <div class="trayicons d-flex align-items-center">
   <svg class="i12" viewBox="0 0 12 12"><path d="M1.500 8.500L6 3.500l4.500 5" fill="none" stroke="#222" stroke-width="1.200"/></svg>
   <svg class="i14" viewBox="0 0 14 14"><path d="M3 4h7v6H3zM10 6l2.500-1v4L10 8M4 1.500q2.500-1.500 5 0M4 12.500q2.500 1.500 5 0" fill="none" stroke="#222" stroke-width="1.100"/></svg>
   <svg class="i14" viewBox="0 0 14 14"><path d="M4 3h9.500v7H4zM6 12.500h6M9 10v2.500M.5 1h4v4h-4zM2.500 5v7.500H5" fill="none" stroke="#222"/></svg>
   <svg width="16" height="14" viewBox="0 0 16 14"><path d="M1 5h2l3-3v10L3 9H1zM8 5q1.500 2 0 4M10.500 3.500q2.500 3.500 0 7M13 2q3.500 5 0 10" fill="none" stroke="#222" stroke-width="1.100"/></svg>
   <svg class="i14 ms-1" viewBox="0 0 14 14"><path d="M1 11q2-3 4-1t5-2q2-3-1-2T4 12q5 0 7-4M8 7l4-6 1.500 1L9 9" fill="none" stroke="#222" stroke-width="1.200"/></svg>
  </div>
  <span class="clock me-2">POR<br>PTB2</span>
  <span class="clock">15:03<br>04/12/2021</span>
  <button class="app ms-1 me-1" aria-label="Notifications"><svg class="i14 me-1" viewBox="0 0 14 14"><path d="M0 1h14v10H7l-3 3v-3H0z"/><path d="M2.500 4h9M2.500 6h9M2.500 8h6" stroke="#d4dcec"/></svg><span class="count" style="right:6px;bottom:4px">1</span></button>
 </div>
</div>
<div class="watermark"><div style="font-size:16px;line-height:20px">Ativar o Windows</div><div style="font-size:12px;line-height:18px">Acesse Configurações para ativar o Windows.</div></div>
<script src="https://cdn.jsdelivr.net/npm/bootstrap@5.3.0/dist/js/bootstrap.bundle.min.js"></script>
</body>
</html>
